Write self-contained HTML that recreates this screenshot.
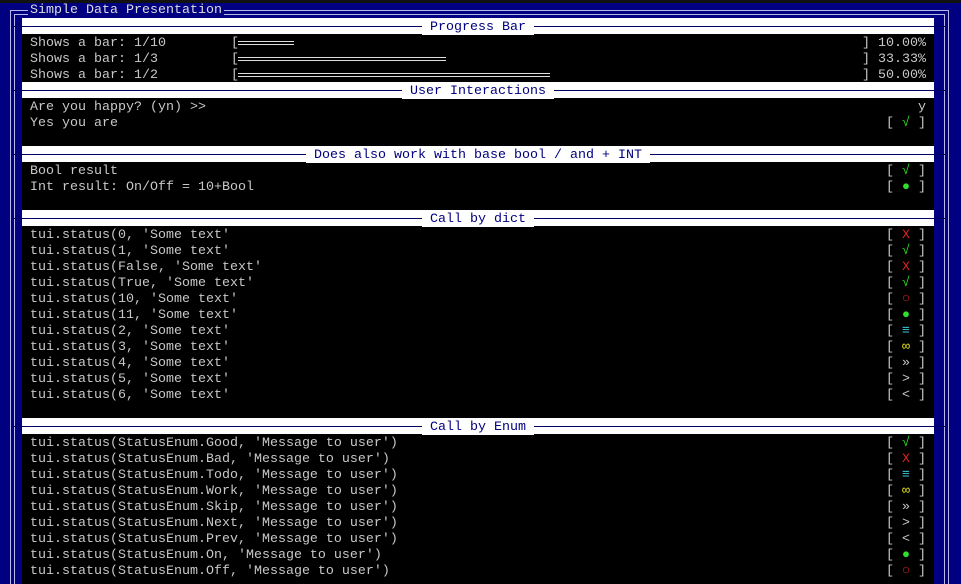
<!DOCTYPE html>
<html><head><meta charset="utf-8"><style>
body{margin:0;width:961px;height:584px;background:#000080;overflow:hidden;position:relative;font-family:"Liberation Mono","DejaVu Sans Mono",monospace;font-size:13.33px;color:#c8c8c8}
.v{position:absolute;width:1px;background:#b8b8e8}
.h{position:absolute;height:1px;background:#b8b8e8}
.panel{position:absolute;left:22px;width:912px;background:#000}
.hd{position:absolute;left:22px;width:912px;height:16px;background:#fff}
.hl{position:absolute;left:13px;width:934px;height:1px;background:#000060}
.ht{position:absolute;left:0;top:2px;width:912px;text-align:center;height:16px;line-height:16px;color:#000080}
.ht span{background:#fff;padding:0 8px}
.r{position:absolute;left:30px;width:896px;height:16px;line-height:16px;white-space:pre;margin-top:2px}
.s{position:absolute;right:0;top:0;white-space:pre}
.g{color:#2ee02e}.rd{color:#e02020}.c{color:#40c8e0}.y{color:#e8e020}
.bar{position:absolute;height:4px;border-top:1px solid #ddd;border-bottom:1px solid #ddd;top:6px;box-sizing:border-box}
</style></head><body>
<div style="position:absolute;left:0;top:0;width:961px;height:3px;background:#111"></div>
<div class="v" style="left:10px;top:10px;height:574px"></div>
<div class="v" style="left:14px;top:14px;height:570px"></div>
<div class="v" style="left:944px;top:14px;height:570px"></div>
<div class="v" style="left:948px;top:10px;height:574px"></div>
<div class="h" style="left:10px;top:10px;width:939px"></div>
<div class="h" style="left:14px;top:14px;width:931px"></div>
<div style="position:absolute;left:28px;top:3px;height:16px;line-height:16px;background:#000080;color:#ddd;padding:0 2px">Simple Data Presentation</div>

<div class="panel" style="top:18px;height:566px"></div>

<div class="hd" style="top:18px"></div><div class="hl" style="top:26px"></div>
<div class="hd" style="top:18px;background:transparent"><div class="ht"><span>Progress Bar</span></div></div>
<div class="r" style="top:34px">Shows a bar: 1/10<span style="position:absolute;left:201px">[</span><span class="s">] 10.00%</span></div>
<div class="bar" style="left:238px;top:41px;width:56px"></div>
<div class="r" style="top:50px">Shows a bar: 1/3<span style="position:absolute;left:201px">[</span><span class="s">] 33.33%</span></div>
<div class="bar" style="left:238px;top:57px;width:208px"></div>
<div class="r" style="top:66px">Shows a bar: 1/2<span style="position:absolute;left:201px">[</span><span class="s">] 50.00%</span></div>
<div class="bar" style="left:238px;top:73px;width:312px"></div>

<div class="hd" style="top:82px"></div><div class="hl" style="top:90px"></div>
<div class="hd" style="top:82px;background:transparent"><div class="ht"><span>User Interactions</span></div></div>
<div class="r" style="top:98px">Are you happy? (yn) &gt;&gt;<span class="s">y</span></div>
<div class="r" style="top:114px">Yes you are<span class="s">[ <span class="g">√</span> ]</span></div>

<div class="hd" style="top:146px"></div><div class="hl" style="top:154px"></div>
<div class="hd" style="top:146px;background:transparent"><div class="ht"><span>Does also work with base bool / and + INT</span></div></div>
<div class="r" style="top:162px">Bool result<span class="s">[ <span class="g">√</span> ]</span></div>
<div class="r" style="top:178px">Int result: On/Off = 10+Bool<span class="s">[ <span class="g">●</span> ]</span></div>

<div class="hd" style="top:210px"></div><div class="hl" style="top:218px"></div>
<div class="hd" style="top:210px;background:transparent"><div class="ht"><span>Call by dict</span></div></div>
<div class="r" style="top:226px">tui.status(0, 'Some text'<span class="s">[ <span class="rd">X</span> ]</span></div>
<div class="r" style="top:242px">tui.status(1, 'Some text'<span class="s">[ <span class="g">√</span> ]</span></div>
<div class="r" style="top:258px">tui.status(False, 'Some text'<span class="s">[ <span class="rd">X</span> ]</span></div>
<div class="r" style="top:274px">tui.status(True, 'Some text'<span class="s">[ <span class="g">√</span> ]</span></div>
<div class="r" style="top:290px">tui.status(10, 'Some text'<span class="s">[ <span class="rd">○</span> ]</span></div>
<div class="r" style="top:306px">tui.status(11, 'Some text'<span class="s">[ <span class="g">●</span> ]</span></div>
<div class="r" style="top:322px">tui.status(2, 'Some text'<span class="s">[ <span class="c">≡</span> ]</span></div>
<div class="r" style="top:338px">tui.status(3, 'Some text'<span class="s">[ <span class="y">∞</span> ]</span></div>
<div class="r" style="top:354px">tui.status(4, 'Some text'<span class="s">[ » ]</span></div>
<div class="r" style="top:370px">tui.status(5, 'Some text'<span class="s">[ &gt; ]</span></div>
<div class="r" style="top:386px">tui.status(6, 'Some text'<span class="s">[ &lt; ]</span></div>

<div class="hd" style="top:418px"></div><div class="hl" style="top:426px"></div>
<div class="hd" style="top:418px;background:transparent"><div class="ht"><span>Call by Enum</span></div></div>
<div class="r" style="top:434px">tui.status(StatusEnum.Good, 'Message to user')<span class="s">[ <span class="g">√</span> ]</span></div>
<div class="r" style="top:450px">tui.status(StatusEnum.Bad, 'Message to user')<span class="s">[ <span class="rd">X</span> ]</span></div>
<div class="r" style="top:466px">tui.status(StatusEnum.Todo, 'Message to user')<span class="s">[ <span class="c">≡</span> ]</span></div>
<div class="r" style="top:482px">tui.status(StatusEnum.Work, 'Message to user')<span class="s">[ <span class="y">∞</span> ]</span></div>
<div class="r" style="top:498px">tui.status(StatusEnum.Skip, 'Message to user')<span class="s">[ » ]</span></div>
<div class="r" style="top:514px">tui.status(StatusEnum.Next, 'Message to user')<span class="s">[ &gt; ]</span></div>
<div class="r" style="top:530px">tui.status(StatusEnum.Prev, 'Message to user')<span class="s">[ &lt; ]</span></div>
<div class="r" style="top:546px">tui.status(StatusEnum.On, 'Message to user')<span class="s">[ <span class="g">●</span> ]</span></div>
<div class="r" style="top:562px">tui.status(StatusEnum.Off, 'Message to user')<span class="s">[ <span class="rd">○</span> ]</span></div>
</body></html>
